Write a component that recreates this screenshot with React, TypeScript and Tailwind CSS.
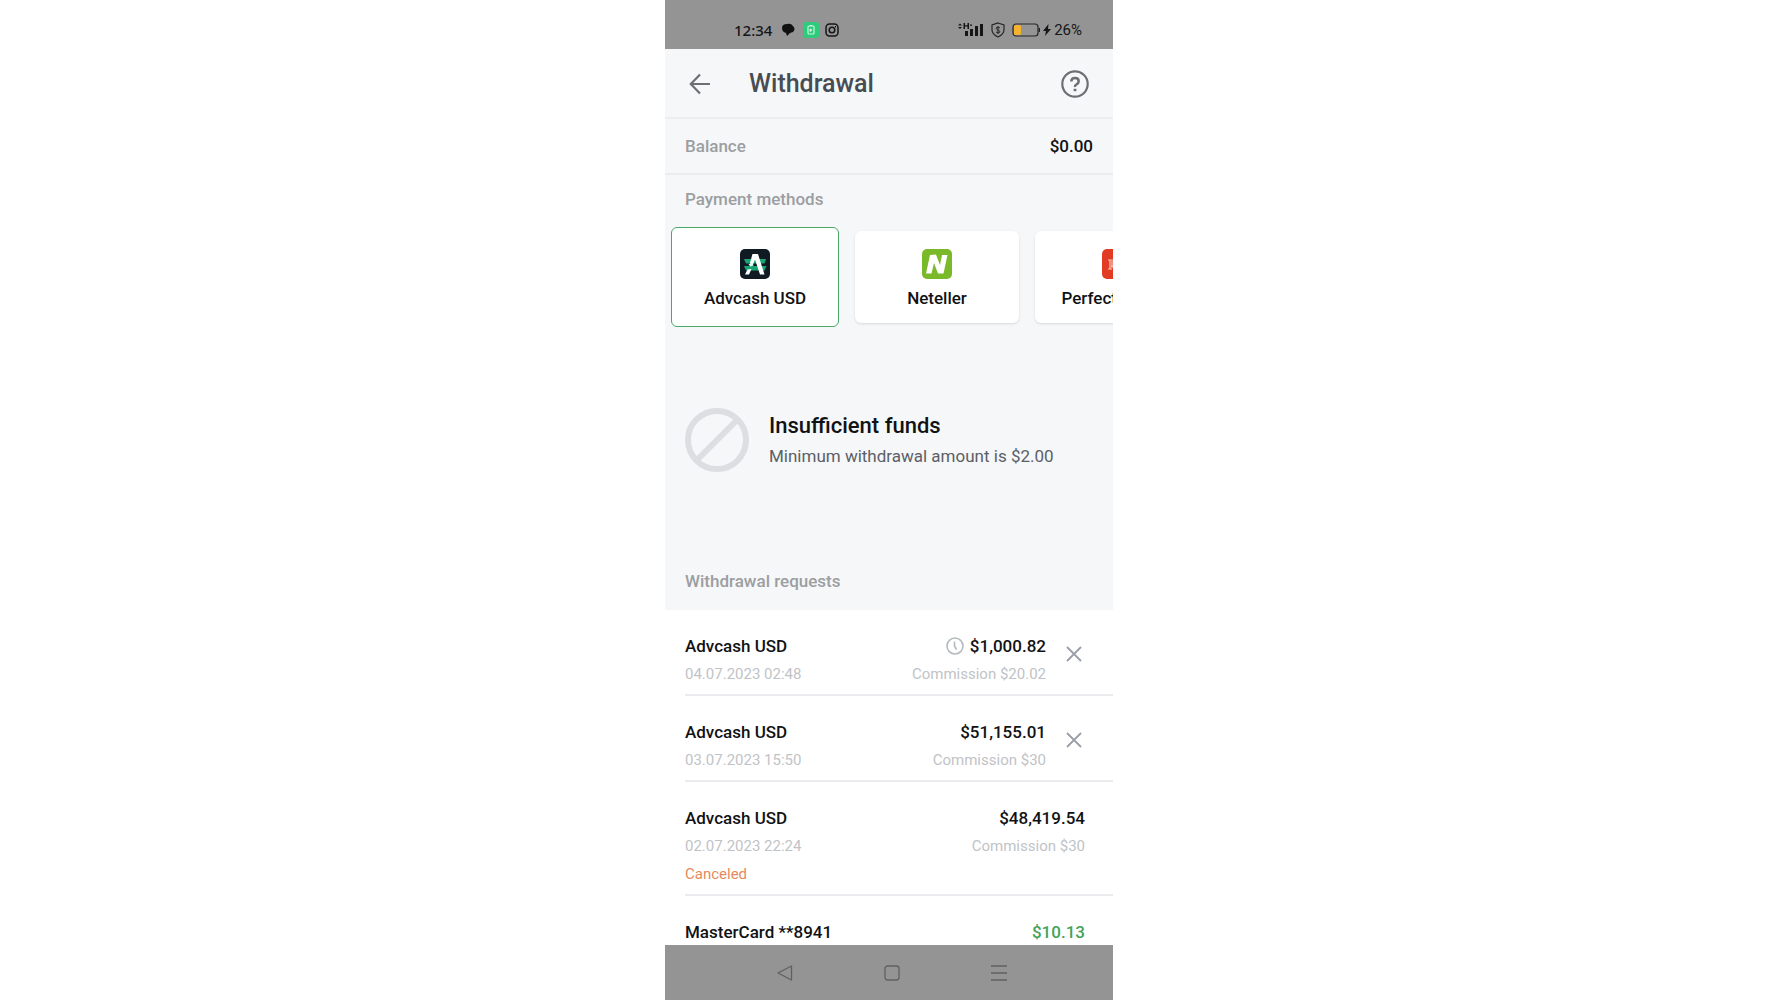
import { useState } from 'react';
import clsx from 'clsx';

const methods = [
  { id: 'advcash', name: 'Advcash USD', Logo: AdvcashLogo },
  { id: 'neteller', name: 'Neteller', Logo: NetellerLogo },
  { id: 'perfect', name: 'Perfect Money', Logo: PerfectLogo },
];

const requests = [
  { id: 1, name: 'Advcash USD', date: '04.07.2023 02:48', amount: '$1,000.82', commission: 'Commission $20.02', pending: true, cancelable: true },
  { id: 2, name: 'Advcash USD', date: '03.07.2023 15:50', amount: '$51,155.01', commission: 'Commission $30', cancelable: true },
  { id: 3, name: 'Advcash USD', date: '02.07.2023 22:24', amount: '$48,419.54', commission: 'Commission $30', status: 'Canceled' },
  { id: 4, name: 'MasterCard **8941', amount: '$10.13', paid: true },
];

function AdvcashLogo() {
  return (
    <svg className="h-[30px] w-[30px]" viewBox="0 0 30 30" aria-hidden="true">
      <rect width="30" height="30" rx="5" fill="#101a22" />
      <path d="M4 10h22l-1.500 4.500H6zM4 17h22.500l-2 4.500H6z" fill="#17a673" />
      <path d="M12.500 5h5.500l6.500 20.500h-4.500L15 10.500l-2 5-3.200-1z" fill="#fff" />
      <path d="M7.500 20.500l4-.5-2.500 5.500H5z" fill="#fff" />
      <path d="M8.500 15.500l4-2 1 3-3 1z" fill="#d9fff0" />
    </svg>
  );
}

function NetellerLogo() {
  return (
    <svg className="h-[30px] w-[30px]" viewBox="0 0 30 30" aria-hidden="true">
      <rect width="30" height="30" rx="5" fill="#7ab929" />
      <path d="M8 6l6-.5 4 10.500 2-10h5.500l-4 18.500h-5.500l-4-10.500-2.500 10.500H4z" fill="#fff" />
    </svg>
  );
}

function PerfectLogo() {
  return (
    <svg className="h-[30px] w-[30px]" viewBox="0 0 30 30" aria-hidden="true">
      <rect width="30" height="30" rx="5" fill="#e23b24" />
      <path d="M6 11h5q4 0 4 3t-4 3H9M8 11v9M6 20h4M10 12v7" fill="none" stroke="#f9c9c0" strokeWidth="1.200" />
    </svg>
  );
}

function StatusBar() {
  return (
    <div className="flex h-[49px] shrink-0 items-center bg-[#949494] pt-[11px] pr-[31px] pl-[69px] text-[15px] text-[#161616]">
      <span className="font-['Noto_Sans',sans-serif] font-medium">12:34</span>
      <svg className="ml-[10px] h-4 w-[13px]" viewBox="0 0 13 16" aria-hidden="true">
        <path d="M0 6q0-4 5-4 4-1 6 2 3 3 0 6l-3 1-3 3-1-3Q0 10 0 6z" fill="#111" />
      </svg>
      <svg className="ml-2 h-4 w-4" viewBox="0 0 16 16" aria-hidden="true">
        <rect width="16" height="16" rx="3" fill="#2fcb7c" />
        <rect x="5" y="4" width="6" height="8" rx="1" fill="none" stroke="#c8f5dd" strokeWidth="1.200" />
        <path d="M6.500 3.500h3M7 7l2 1-2 1.500z" fill="#c8f5dd" stroke="#c8f5dd" />
      </svg>
      <svg className="ml-[6px] h-[14px] w-[14px]" viewBox="0 0 14 14" fill="none" stroke="#161616" strokeWidth="1.500" aria-hidden="true">
        <rect x="1" y="1" width="12" height="12" rx="3.500" />
        <circle cx="7" cy="7" r="2.800" />
        <path d="M10 3.800h1" />
      </svg>
      <svg className="ml-auto h-4 w-[25px]" viewBox="0 0 25 16" fill="#161616" aria-hidden="true">
        <path d="M0 3.500l2-2 2 2zM0 5h4l-2 2zM5.500 1h1.500v2.200h2.500V1h1.500v6H9.500V4.600H7V7H5.500zM12 2.500h2v1.300h-2z" />
        <path d="M7 9h3v5H7zM12 7h3v7h-3zM17 4h3v10h-3zM22 2h3v12h-3z" />
      </svg>
      <svg className="ml-2 h-4 w-[14px]" viewBox="0 0 14 16" fill="none" stroke="#262626" aria-hidden="true">
        <path d="M7 1l6 2v5q0 4-6 7-6-3-6-7V3z" strokeWidth="1.200" />
        <path d="M9 6q-2-1.500-3.500-.500T7 8t1.500 2.500T5 10M7 4v8" />
      </svg>
      <svg className="ml-[7px] h-[14px] w-7" viewBox="0 0 28 14" fill="none" aria-hidden="true">
        <rect x="1" y="1" width="25" height="12" rx="3" stroke="#262626" strokeWidth="1.200" />
        <rect x="2" y="2" width="7" height="10" rx="1.500" fill="#f5b22c" />
        <path d="M27.300 5v4" stroke="#262626" strokeWidth="1.400" />
      </svg>
      <svg className="ml-[3px] h-3 w-2" viewBox="0 0 8 12" fill="#161616" aria-hidden="true">
        <path d="M5.500 0L0 7h3l-1 5 6-7H5z" />
      </svg>
      <span className="ml-[3px] font-[Roboto,sans-serif]">26%</span>
    </div>
  );
}

function ClockIcon() {
  return (
    <svg className="h-[18px] w-[18px]" viewBox="0 0 18 18" fill="none" stroke="#b4babd" strokeWidth="1.600" aria-label="Pending">
      <circle cx="9" cy="9" r="8" />
      <path d="M8.500 4.500V9l2 3.500" />
    </svg>
  );
}

function NavBar() {
  return (
    <nav className="flex h-[55px] shrink-0 items-center justify-center gap-[91px] bg-[#949494] pl-[5px]">
      <button type="button" aria-label="Back">
        <svg className="h-4 w-4" viewBox="0 0 16 16" fill="none" stroke="#606060" strokeWidth="1.300" strokeLinejoin="round">
          <path d="M1 8l13.500-7v14z" />
        </svg>
      </button>
      <button type="button" aria-label="Home">
        <svg className="h-4 w-4" viewBox="0 0 16 16" fill="none" stroke="#606060" strokeWidth="1.300">
          <rect x="1" y="1" width="14" height="14" rx="2.500" />
        </svg>
      </button>
      <button type="button" aria-label="Recent apps">
        <svg className="h-4 w-4" viewBox="0 0 16 16" fill="none" stroke="#606060" strokeWidth="1.300">
          <path d="M0 1h16M0 8h16M0 15h16" />
        </svg>
      </button>
    </nav>
  );
}

export default function App() {
  const [selected, setSelected] = useState('advcash');

  return (
    <div className="flex h-screen justify-center bg-white font-[Roboto,sans-serif]">
      <div className="flex w-full max-w-md flex-col overflow-hidden bg-[#f5f7f9]">
        <StatusBar />

        {/* Header */}
        <header className="flex h-[70px] shrink-0 items-center border-b-2 border-[#eceef0] px-6 pt-[2px]">
          <button type="button" aria-label="Back">
            <svg className="h-[22px] w-[22px]" viewBox="0 0 22 22" fill="none" stroke="#6c6f73" strokeWidth="2.200">
              <path d="M21 11H2M11 1.500L1.800 11l9.200 9.500" />
            </svg>
          </button>
          <h1 className="ml-[38px] text-[25px] leading-8 font-medium text-[#484c53]">Withdrawal</h1>
          <button type="button" aria-label="Help" className="ml-auto">
            <svg className="h-7 w-7" viewBox="0 0 28 28" fill="none" stroke="#6c6f73" strokeWidth="2.200">
              <circle cx="14" cy="14" r="12.700" />
              <path d="M10.300 11.500q0-3.500 3.700-3.500t3.700 3.200q0 1.800-2 3T14 17" strokeWidth="2.500" />
              <path d="M14 18.800v2.400" strokeWidth="2.800" />
            </svg>
          </button>
        </header>

        {/* Balance */}
        <div className="flex h-14 shrink-0 items-center justify-between border-b-2 border-[#eaecee] px-5 text-[17px] leading-7 font-medium">
          <span className="text-[#9c9ea1]">Balance</span>
          <span className="text-[#111214]">$0.00</span>
        </div>

        <section className="shrink-0">
          <h2 className="px-5 pt-[10px] text-[17px] leading-7 font-medium text-[#9c9ea1]">Payment methods</h2>
          <div className="mt-[14px] flex h-[100px] items-center gap-4 overflow-hidden pl-[6px]">
            {methods.map(({ id, name, Logo }) => (
              <button
                key={id}
                type="button"
                aria-pressed={selected === id}
                onClick={() => setSelected(id)}
                className={clsx(
                  'flex shrink-0 flex-col items-center justify-center gap-[5px] rounded-md bg-white pt-[6px] text-[17px] leading-7 font-medium whitespace-nowrap text-[#111214]',
                  selected === id ? 'h-[100px] w-[168px] border border-[#4ba768]' : 'h-[92px] w-[164px] shadow',
                )}
              >
                <Logo />
                {name}
              </button>
            ))}
          </div>
        </section>

        {/* Insufficient funds */}
        <section className="flex h-[226px] shrink-0 items-center px-5">
          <svg className="h-16 w-16" viewBox="0 0 64 64" fill="none" stroke="#dcdee1" strokeWidth="6" aria-hidden="true">
            <circle cx="32" cy="32" r="29" />
            <path d="M12 52L52 12" />
          </svg>
          <div className="ml-5">
            <p className="text-[22px] leading-8 font-medium text-[#111214]">Insufficient funds</p>
            <p className="text-[17px] leading-7 text-[#5c6066]">Minimum withdrawal amount is $2.00</p>
          </div>
        </section>

        <h2 className="h-[57px] shrink-0 px-5 pt-[14px] text-[17px] leading-7 font-medium text-[#9c9ea1]">Withdrawal requests</h2>

        <ul className="min-h-0 flex-1 overflow-hidden bg-white pl-5">
          {requests.map((r) => (
            <li key={r.id} className="border-b-2 border-[#eaebee] pt-[22px] pb-[6px] last:border-b-0 last:pb-0">
              <div className="flex">
                <div className="flex-1">
                  <p className="text-[17px] leading-7 font-medium text-[#111214]">{r.name}</p>
                  {r.date && <p className="text-[15px] leading-7 text-[#bfc3c7]">{r.date}</p>}
                  {r.status && <p className="text-[15px] leading-7 text-[#e58a5c]">{r.status}</p>}
                </div>
                <div className={clsx('text-right', r.cancelable ? 'pr-5' : 'pr-7')}>
                  <p className={clsx('flex items-center justify-end gap-[6px] text-[17px] leading-7 font-medium', r.paid ? 'text-[#43a35c]' : 'text-[#111214]')}>
                    {r.pending && <ClockIcon />}
                    {r.amount}
                  </p>
                  {r.commission && <p className="text-[15px] leading-7 text-[#bfc3c7]">{r.commission}</p>}
                </div>
                {r.cancelable && (
                  <button type="button" aria-label="Cancel request" className="mr-[31px] flex h-11 items-center">
                    <svg className="h-4 w-4" viewBox="0 0 16 16" fill="none" stroke="#9a9ea8" strokeWidth="1.800">
                      <path d="M1 1l14 14M15 1L1 15" />
                    </svg>
                  </button>
                )}
              </div>
            </li>
          ))}
        </ul>

        <NavBar />
      </div>
    </div>
  );
}
